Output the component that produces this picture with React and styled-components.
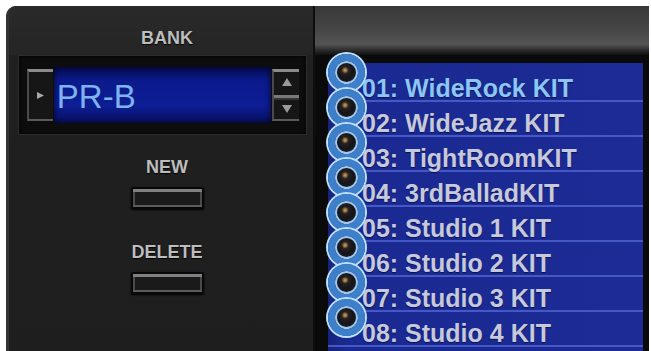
import React from 'react';
import styled, { createGlobalStyle } from 'styled-components';

const Global = createGlobalStyle`
  html, body { margin: 0; padding: 0; background: #ffffff; }
  body { font-family: "Liberation Sans", Arial, sans-serif; }
`;

const Page = styled.div`
  width: 651px;
  height: 351px;
  overflow: hidden;
  box-sizing: border-box;
  padding: 6px 2px 0 6px;
  background: #ffffff;
`;

const Device = styled.div`
  display: grid;
  grid-template-columns: 309px 1fr;
  height: 345px;
  background: #1e1e1e;
  border-top-left-radius: 10px;
  overflow: hidden;
`;

const LeftPanel = styled.section`
  display: flex;
  flex-direction: column;
  box-sizing: border-box;
  background: linear-gradient(180deg, #2a2a2a 0, #252525 49px, #202020 49px, #1e1e1e 100%);
  border-left: 3px solid #333333;
  border-right: 2px solid #0e0e0e;
  border-top-left-radius: 10px;
`;

const Label = styled.div`
  font-size: 18px;
  line-height: 18px;
  font-weight: 700;
  color: #bdbdbd;
  text-align: center;
  text-shadow: 0 1px 1px #000;
`;

const Header = styled.div`
  height: 49px;
  box-sizing: border-box;
  padding: 23px 0 0 12px;
`;

const Display = styled.div`
  display: flex;
  align-items: center;
  box-sizing: border-box;
  margin-left: 9px;
  width: 289px;
  height: 80px;
  padding: 0 7px 0 8px;
  background: #0d0d0d;
  border: 1px solid #2c2c2c;
  box-shadow: inset 0 0 4px #000;
`;

const SideKey = styled.div`
  display: flex;
  flex-direction: column;
  align-items: center;
  justify-content: ${p => (p.$spin ? 'space-between' : 'center')};
  box-sizing: border-box;
  width: ${p => p.$w}px;
  height: 52px;
  background: #161616;
  border-top: 3px solid #8a8a8a;
  border-bottom: 2px solid #5a5a5a;
  border-left: 2px solid #4a4a4a;
  padding: ${p => (p.$spin ? '6px 0 4px' : '0')};
`;

const SpinDivider = styled.div`
  width: 100%;
  height: 3px;
  background: #7a7a7a;
  box-shadow: 0 2px 0 #333;
`;

const Lcd = styled.div`
  display: flex;
  align-items: center;
  box-sizing: border-box;
  width: 219px;
  height: 56px;
  margin: 0 1px;
  padding: 2px 0 0 3px;
  background: linear-gradient(180deg, #050c52 0%, #0b1a8c 25%, #0d1d94 70%, #07105e 100%);
  box-shadow: inset 0 0 6px rgba(0, 0, 20, 0.8);
`;

const LcdText = styled.span`
  font-size: 33px;
  line-height: 33px;
  color: #7fb3ef;
`;

const Controls = styled.div`
  display: flex;
  flex-direction: column;
  align-items: center;
  padding-left: 12px;
  margin-top: 23px;
  gap: 34px;
`;

const ControlGroup = styled.div`
  display: flex;
  flex-direction: column;
  align-items: center;
  gap: 11px;
`;

const PadButton = styled.div`
  box-sizing: border-box;
  width: 73px;
  height: 22px;
  background: #1a1a1a;
  border: 2px solid #080808;
  border-radius: 2px;
  box-shadow: inset 0 3px 0 #808080, inset 0 -2px 0 #5c5c5c, inset 2px 0 0 #4a4a4a,
    inset -2px 0 0 #4a4a4a, 0 1px 2px #000;
`;

const RightPanel = styled.section`
  display: flex;
  flex-direction: column;
  min-width: 0;
`;

const RightHeader = styled.div`
  height: 49px;
  background: linear-gradient(180deg, #383838 0%, #454545 45%, #545454 78%, #2c2c2c 90%, #111111 100%);
`;

const ListFrame = styled.div`
  flex: 1;
  box-sizing: border-box;
  padding: 8px 6px 0 13px;
  background: #0a0a0a;
`;

const List = styled.ul`
  list-style: none;
  margin: 0;
  padding: 4px 0 0;
  height: 100%;
  background: linear-gradient(90deg, #16227c 0%, #1b2a92 6%, #1c2b95 100%);
`;

const Row = styled.li`
  position: relative;
  height: 35px;
  box-sizing: border-box;
  padding: 9px 0 0 34px;
  border-bottom: 2px solid #4459c6;
  font-size: 25px;
  line-height: 25px;
  font-weight: 700;
  white-space: nowrap;
  color: ${p => (p.$active ? '#8cc6f4' : '#c6c8dc')};
  text-shadow: 0 1px 1px rgba(0, 0, 40, 0.6);
`;

const Marker = styled.span`
  position: absolute;
  left: 0;
  top: -13px;
  z-index: 1;
  width: 23px;
  height: 23px;
  border-radius: 50%;
  border: 7px solid #3d7fca;
  background: radial-gradient(circle at 44% 40%, #d0a858 0, #9a7840 1.5px, #262224 3.5px, #151418 8px, #1c1c22 12px);
  box-shadow: 0 0 0 2px #bde0fb, inset 0 0 0 2px #9ec8f0;
`;

const Tri = ({ dir = 'right', size = 7, color = '#a8a8a8' }) => {
  const pts = {
    right: `0,0 ${size},${size / 2} 0,${size}`,
    up: `0,${size * 0.8} ${size / 2},0 ${size},${size * 0.8}`,
    down: `0,0 ${size},0 ${size / 2},${size * 0.8}`,
  }[dir];
  return (
    <svg width={size} height={size} viewBox={`0 0 ${size} ${size}`}>
      <polygon points={pts} fill={color} />
    </svg>
  );
};

const kits = [
  '01: WideRock KIT',
  '02: WideJazz KIT',
  '03: TightRoomKIT',
  '04: 3rdBalladKIT',
  '05: Studio 1 KIT',
  '06: Studio 2 KIT',
  '07: Studio 3 KIT',
  '08: Studio 4 KIT',
];

export default function App() {
  return (
    <>
      <Global />
      <Page>
        <Device>
          <LeftPanel>
            <Header>
              <Label>BANK</Label>
            </Header>
            <Display>
              <SideKey $w={26}>
                <Tri dir="right" size={7} />
              </SideKey>
              <Lcd>
                <LcdText>PR-B</LcdText>
              </Lcd>
              <SideKey $w={27} $spin>
                <Tri dir="up" size={10} color="#9a9a9a" />
                <SpinDivider />
                <Tri dir="down" size={10} color="#9a9a9a" />
              </SideKey>
            </Display>
            <Controls>
              <ControlGroup>
                <Label>NEW</Label>
                <PadButton />
              </ControlGroup>
              <ControlGroup>
                <Label>DELETE</Label>
                <PadButton />
              </ControlGroup>
            </Controls>
          </LeftPanel>
          <RightPanel>
            <RightHeader />
            <ListFrame>
              <List>
                {kits.map((k, i) => (
                  <Row key={k} $active={i === 0}>
                    <Marker />
                    {k}
                  </Row>
                ))}
              </List>
            </ListFrame>
          </RightPanel>
        </Device>
      </Page>
    </>
  );
}
